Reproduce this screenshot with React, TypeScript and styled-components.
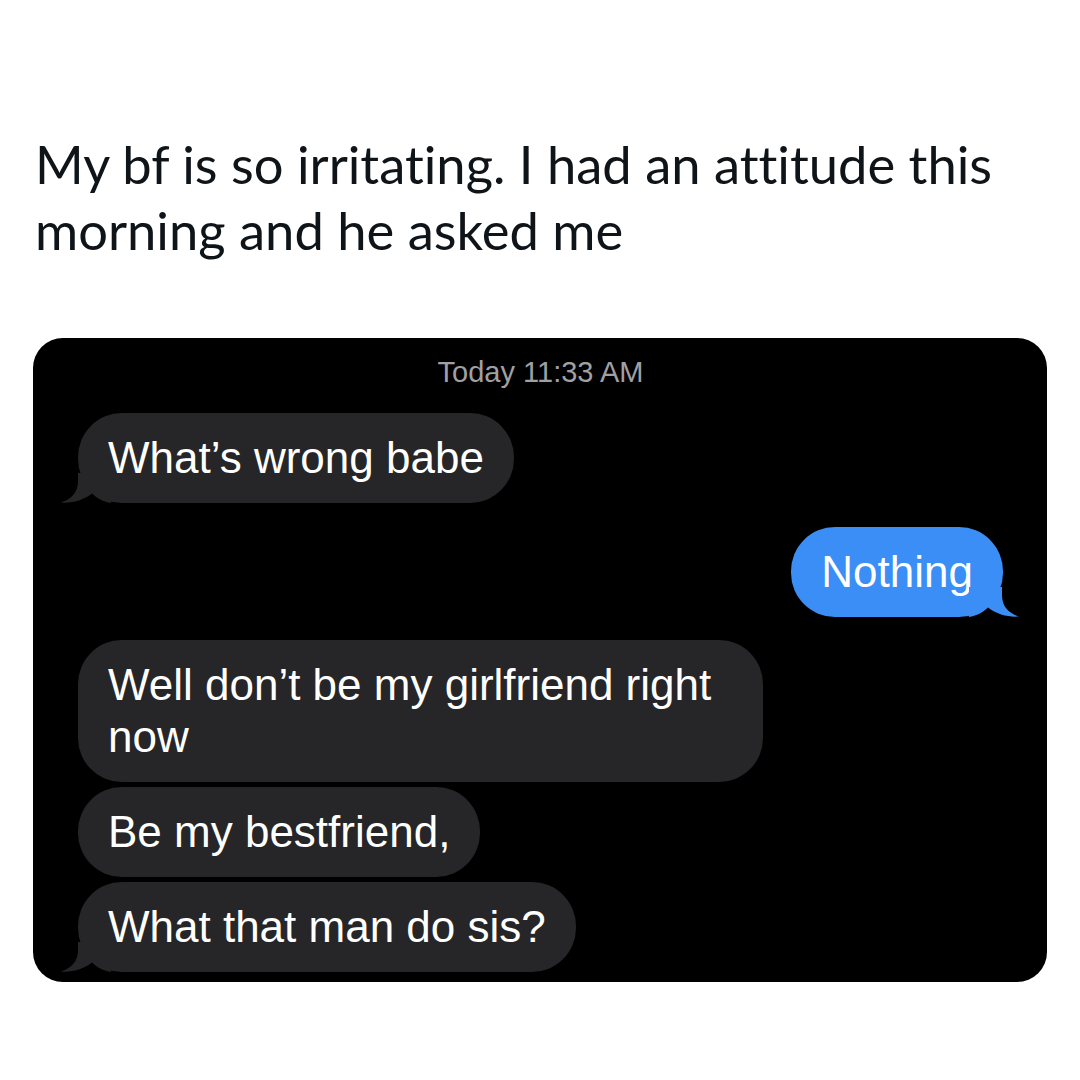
import styled, { createGlobalStyle } from 'styled-components';

const GlobalStyle = createGlobalStyle`
  html, body {
    margin: 0;
    padding: 0;
    background: #ffffff;
  }
`;

const Page = styled.div`
  width: 1080px;
  height: 1080px;
  box-sizing: border-box;
  padding: 131px 33px 0 33px;
  background: #ffffff;
`;

const Caption = styled.p`
  margin: 0 0 75px 2px;
  font-family: Lato, "Liberation Sans", sans-serif;
  font-size: 52.5px;
  line-height: 66px;
  font-variant-ligatures: none;
  color: #0f1419;
`;

const ChatPanel = styled.section`
  display: flex;
  flex-direction: column;
  padding: 18px 44px 10px 45px;
  background: #000000;
  border-radius: 30px;
  font-family: "Liberation Sans", Arial, sans-serif;
`;

const Timestamp = styled.div`
  margin-bottom: 25px;
  text-align: center;
  font-size: 29px;
  line-height: 32px;
  color: #a0a0a4;
`;

const Row = styled.div<{ $out?: boolean; $gap: number }>`
  display: flex;
  justify-content: ${(p) => (p.$out ? 'flex-end' : 'flex-start')};
  margin-top: ${(p) => p.$gap}px;
`;

const Bubble = styled.div<{ $out?: boolean }>`
  position: relative;
  max-width: 685px;
  box-sizing: border-box;
  padding: 19px 30px;
  border-radius: 44px;
  background: ${(p) => (p.$out ? '#3a8ef6' : '#262628')};
  color: #ffffff;
  font-size: 44px;
  line-height: 52px;
`;

const Tail = styled.svg<{ $out?: boolean }>`
  position: absolute;
  bottom: 0;
  width: 50px;
  height: 30px;
  ${(p) => (p.$out ? 'right: -16px; transform: scaleX(-1);' : 'left: -17px;')}
`;

const BubbleTail = ({ out, color }: { out?: boolean; color: string }) => (
  <Tail $out={out} viewBox="0 0 50 30">
    <path
      d="M17 0 L17 8 C17 19 11 26 0 29.5 C10 30.5 22 27.5 31 20.5 C37 26 43 29 50 30 L50 0 Z"
      fill={color}
    />
  </Tail>
);

interface MessageProps {
  children: any;
  out?: boolean;
  tail?: boolean;
  gap: number;
}

const Message = ({ children, out, tail, gap }: MessageProps) => (
  <Row $out={out} $gap={gap}>
    <Bubble $out={out}>
      {tail && <BubbleTail out={out} color={out ? '#3a8ef6' : '#262628'} />}
      {children}
    </Bubble>
  </Row>
);

export default function App() {
  return (
    <Page>
      <GlobalStyle />
      <Caption>
        My bf is so irritating. I had an attitude this morning and he asked me
      </Caption>
      <ChatPanel>
        <Timestamp>Today 11:33 AM</Timestamp>
        <Message gap={0} tail>What’s wrong babe</Message>
        <Message gap={24} out tail>Nothing</Message>
        <Message gap={23}>Well don’t be my girlfriend right now</Message>
        <Message gap={5}>Be my bestfriend,</Message>
        <Message gap={5} tail>What that man do sis?</Message>
      </ChatPanel>
    </Page>
  );
}
